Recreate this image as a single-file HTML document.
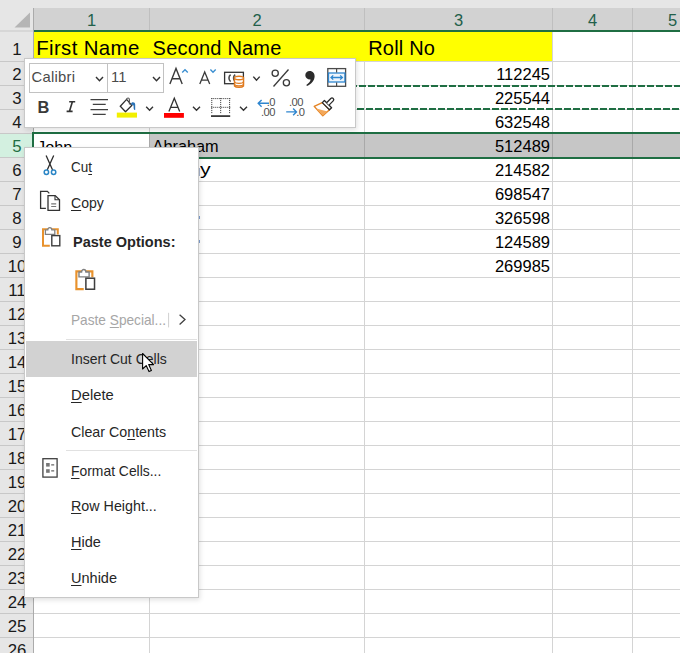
<!DOCTYPE html>
<html><head><meta charset="utf-8"><style>
*{box-sizing:border-box}
html,body{margin:0;padding:0}
body{width:680px;height:653px;overflow:hidden;position:relative;background:#fff;font-family:"Liberation Sans",sans-serif;color:#000}
.ab{position:absolute}
.t{position:absolute;white-space:nowrap;line-height:1}
.mi{position:absolute;left:71px;font-size:14.2px;color:#262626;white-space:nowrap;line-height:1}
.u{text-decoration:underline;text-underline-offset:1.5px;text-decoration-thickness:1px}
</style></head><body>

<div class="ab" style="left:0;top:0;width:680px;height:8px;background:#e6e6e6"></div>
<div class="ab" style="left:0;top:0;width:33px;height:32px;background:#e6e6e6"></div>
<svg class="ab" style="left:0;top:0" width="33" height="32"><polygon points="30,12.5 30,27.5 14.5,27.5" fill="#b5b5b5"/><rect x="0" y="30.5" width="33" height="1" fill="#c8c8c8"/></svg>
<div class="ab" style="left:33px;top:8px;width:647px;height:22px;background:#d2d2d2"></div>
<div class="ab" style="left:149px;top:8px;width:1px;height:22px;background:#bfbfbf"></div>
<div class="ab" style="left:364px;top:8px;width:1px;height:22px;background:#bfbfbf"></div>
<div class="ab" style="left:552px;top:8px;width:1px;height:22px;background:#bfbfbf"></div>
<div class="ab" style="left:632px;top:8px;width:1px;height:22px;background:#bfbfbf"></div>
<div class="t" style="left:71.5px;width:40px;text-align:center;top:12.23px;font-size:16.5px;color:#22604a">1</div>
<div class="t" style="left:237.0px;width:40px;text-align:center;top:12.23px;font-size:16.5px;color:#22604a">2</div>
<div class="t" style="left:438.5px;width:40px;text-align:center;top:12.23px;font-size:16.5px;color:#22604a">3</div>
<div class="t" style="left:572.5px;width:40px;text-align:center;top:12.23px;font-size:16.5px;color:#22604a">4</div>
<div class="t" style="left:652.5px;width:40px;text-align:center;top:12.23px;font-size:16.5px;color:#22604a">5</div>
<div class="ab" style="left:33px;top:30px;width:647px;height:2px;background:#1f6e43"></div>
<div class="ab" style="left:0;top:32px;width:33px;height:621px;background:#e6e6e6"></div>
<div class="ab" style="left:0;top:134px;width:33px;height:23px;background:#d3f0e0"></div>
<div class="ab" style="left:0;top:61px;width:33px;height:1px;background:#c8c8c8"></div>
<div class="ab" style="left:0;top:85px;width:33px;height:1px;background:#c8c8c8"></div>
<div class="ab" style="left:0;top:109px;width:33px;height:1px;background:#c8c8c8"></div>
<div class="ab" style="left:0;top:133px;width:33px;height:1px;background:#c8c8c8"></div>
<div class="ab" style="left:0;top:157px;width:33px;height:1px;background:#c8c8c8"></div>
<div class="ab" style="left:0;top:181px;width:33px;height:1px;background:#c8c8c8"></div>
<div class="ab" style="left:0;top:205px;width:33px;height:1px;background:#c8c8c8"></div>
<div class="ab" style="left:0;top:229px;width:33px;height:1px;background:#c8c8c8"></div>
<div class="ab" style="left:0;top:253px;width:33px;height:1px;background:#c8c8c8"></div>
<div class="ab" style="left:0;top:277px;width:33px;height:1px;background:#c8c8c8"></div>
<div class="ab" style="left:0;top:301px;width:33px;height:1px;background:#c8c8c8"></div>
<div class="ab" style="left:0;top:325px;width:33px;height:1px;background:#c8c8c8"></div>
<div class="ab" style="left:0;top:349px;width:33px;height:1px;background:#c8c8c8"></div>
<div class="ab" style="left:0;top:373px;width:33px;height:1px;background:#c8c8c8"></div>
<div class="ab" style="left:0;top:397px;width:33px;height:1px;background:#c8c8c8"></div>
<div class="ab" style="left:0;top:421px;width:33px;height:1px;background:#c8c8c8"></div>
<div class="ab" style="left:0;top:445px;width:33px;height:1px;background:#c8c8c8"></div>
<div class="ab" style="left:0;top:469px;width:33px;height:1px;background:#c8c8c8"></div>
<div class="ab" style="left:0;top:493px;width:33px;height:1px;background:#c8c8c8"></div>
<div class="ab" style="left:0;top:517px;width:33px;height:1px;background:#c8c8c8"></div>
<div class="ab" style="left:0;top:541px;width:33px;height:1px;background:#c8c8c8"></div>
<div class="ab" style="left:0;top:565px;width:33px;height:1px;background:#c8c8c8"></div>
<div class="ab" style="left:0;top:589px;width:33px;height:1px;background:#c8c8c8"></div>
<div class="ab" style="left:0;top:613px;width:33px;height:1px;background:#c8c8c8"></div>
<div class="ab" style="left:0;top:637px;width:33px;height:1px;background:#c8c8c8"></div>
<div class="ab" style="left:33px;top:8px;width:1px;height:645px;background:#ababab"></div>
<div class="t" style="left:0;width:34px;text-align:center;top:41.78px;font-size:16.8px;color:#1a1a1a">1</div>
<div class="t" style="left:0;width:34px;text-align:center;top:66.58px;font-size:16.8px;color:#1a1a1a">2</div>
<div class="t" style="left:0;width:34px;text-align:center;top:90.58px;font-size:16.8px;color:#1a1a1a">3</div>
<div class="t" style="left:0;width:34px;text-align:center;top:114.58px;font-size:16.8px;color:#1a1a1a">4</div>
<div class="t" style="left:0;width:34px;text-align:center;top:138.58px;font-size:16.8px;color:#1f6e43">5</div>
<div class="t" style="left:0;width:34px;text-align:center;top:162.58px;font-size:16.8px;color:#1a1a1a">6</div>
<div class="t" style="left:0;width:34px;text-align:center;top:186.58px;font-size:16.8px;color:#1a1a1a">7</div>
<div class="t" style="left:0;width:34px;text-align:center;top:210.58px;font-size:16.8px;color:#1a1a1a">8</div>
<div class="t" style="left:0;width:34px;text-align:center;top:234.58px;font-size:16.8px;color:#1a1a1a">9</div>
<div class="t" style="left:0;width:34px;text-align:center;top:258.58px;font-size:16.8px;color:#1a1a1a">10</div>
<div class="t" style="left:0;width:34px;text-align:center;top:282.58px;font-size:16.8px;color:#1a1a1a">11</div>
<div class="t" style="left:0;width:34px;text-align:center;top:306.58px;font-size:16.8px;color:#1a1a1a">12</div>
<div class="t" style="left:0;width:34px;text-align:center;top:330.58px;font-size:16.8px;color:#1a1a1a">13</div>
<div class="t" style="left:0;width:34px;text-align:center;top:354.58px;font-size:16.8px;color:#1a1a1a">14</div>
<div class="t" style="left:0;width:34px;text-align:center;top:378.58px;font-size:16.8px;color:#1a1a1a">15</div>
<div class="t" style="left:0;width:34px;text-align:center;top:402.58px;font-size:16.8px;color:#1a1a1a">16</div>
<div class="t" style="left:0;width:34px;text-align:center;top:426.58px;font-size:16.8px;color:#1a1a1a">17</div>
<div class="t" style="left:0;width:34px;text-align:center;top:450.58px;font-size:16.8px;color:#1a1a1a">18</div>
<div class="t" style="left:0;width:34px;text-align:center;top:474.58px;font-size:16.8px;color:#1a1a1a">19</div>
<div class="t" style="left:0;width:34px;text-align:center;top:498.58px;font-size:16.8px;color:#1a1a1a">20</div>
<div class="t" style="left:0;width:34px;text-align:center;top:522.58px;font-size:16.8px;color:#1a1a1a">21</div>
<div class="t" style="left:0;width:34px;text-align:center;top:546.58px;font-size:16.8px;color:#1a1a1a">22</div>
<div class="t" style="left:0;width:34px;text-align:center;top:570.58px;font-size:16.8px;color:#1a1a1a">23</div>
<div class="t" style="left:0;width:34px;text-align:center;top:594.58px;font-size:16.8px;color:#1a1a1a">24</div>
<div class="t" style="left:0;width:34px;text-align:center;top:618.58px;font-size:16.8px;color:#1a1a1a">25</div>
<div class="t" style="left:0;width:34px;text-align:center;top:642.58px;font-size:16.8px;color:#1a1a1a">26</div>
<div class="ab" style="left:34px;top:61px;width:646px;height:1px;background:#d4d4d4"></div>
<div class="ab" style="left:34px;top:85px;width:646px;height:1px;background:#d4d4d4"></div>
<div class="ab" style="left:34px;top:109px;width:646px;height:1px;background:#d4d4d4"></div>
<div class="ab" style="left:34px;top:133px;width:646px;height:1px;background:#d4d4d4"></div>
<div class="ab" style="left:34px;top:157px;width:646px;height:1px;background:#d4d4d4"></div>
<div class="ab" style="left:34px;top:181px;width:646px;height:1px;background:#d4d4d4"></div>
<div class="ab" style="left:34px;top:205px;width:646px;height:1px;background:#d4d4d4"></div>
<div class="ab" style="left:34px;top:229px;width:646px;height:1px;background:#d4d4d4"></div>
<div class="ab" style="left:34px;top:253px;width:646px;height:1px;background:#d4d4d4"></div>
<div class="ab" style="left:34px;top:277px;width:646px;height:1px;background:#d4d4d4"></div>
<div class="ab" style="left:34px;top:301px;width:646px;height:1px;background:#d4d4d4"></div>
<div class="ab" style="left:34px;top:325px;width:646px;height:1px;background:#d4d4d4"></div>
<div class="ab" style="left:34px;top:349px;width:646px;height:1px;background:#d4d4d4"></div>
<div class="ab" style="left:34px;top:373px;width:646px;height:1px;background:#d4d4d4"></div>
<div class="ab" style="left:34px;top:397px;width:646px;height:1px;background:#d4d4d4"></div>
<div class="ab" style="left:34px;top:421px;width:646px;height:1px;background:#d4d4d4"></div>
<div class="ab" style="left:34px;top:445px;width:646px;height:1px;background:#d4d4d4"></div>
<div class="ab" style="left:34px;top:469px;width:646px;height:1px;background:#d4d4d4"></div>
<div class="ab" style="left:34px;top:493px;width:646px;height:1px;background:#d4d4d4"></div>
<div class="ab" style="left:34px;top:517px;width:646px;height:1px;background:#d4d4d4"></div>
<div class="ab" style="left:34px;top:541px;width:646px;height:1px;background:#d4d4d4"></div>
<div class="ab" style="left:34px;top:565px;width:646px;height:1px;background:#d4d4d4"></div>
<div class="ab" style="left:34px;top:589px;width:646px;height:1px;background:#d4d4d4"></div>
<div class="ab" style="left:34px;top:613px;width:646px;height:1px;background:#d4d4d4"></div>
<div class="ab" style="left:34px;top:637px;width:646px;height:1px;background:#d4d4d4"></div>
<div class="ab" style="left:149px;top:32px;width:1px;height:621px;background:#d4d4d4"></div>
<div class="ab" style="left:364px;top:32px;width:1px;height:621px;background:#d4d4d4"></div>
<div class="ab" style="left:552px;top:32px;width:1px;height:621px;background:#d4d4d4"></div>
<div class="ab" style="left:632px;top:32px;width:1px;height:621px;background:#d4d4d4"></div>
<div class="ab" style="left:34px;top:32px;width:518px;height:29px;background:#ffff00"></div>
<div class="ab" style="left:149px;top:134px;width:531px;height:23px;background:#c6c6c6"></div>
<div class="ab" style="left:149px;top:134px;width:1px;height:23px;background:#a9a9a9"></div>
<div class="ab" style="left:364px;top:134px;width:1px;height:23px;background:#a9a9a9"></div>
<div class="ab" style="left:552px;top:134px;width:1px;height:23px;background:#a9a9a9"></div>
<div class="ab" style="left:632px;top:134px;width:1px;height:23px;background:#a9a9a9"></div>
<div class="t" style="left:36.2px;top:37.93px;font-size:20.4px;letter-spacing:0.38px">First Name</div>
<div class="t" style="left:152.6px;top:38.07px;font-size:20px;letter-spacing:0.2px">Second Name</div>
<div class="t" style="left:368.2px;top:37.87px;font-size:20px;letter-spacing:0.2px">Roll No</div>
<div class="t" style="left:449px;width:101px;text-align:right;top:67.43px;font-size:15.8px;transform:scaleX(1.045);transform-origin:100% 0">112245</div>
<div class="t" style="left:449px;width:101px;text-align:right;top:91.43px;font-size:15.8px;transform:scaleX(1.045);transform-origin:100% 0">225544</div>
<div class="t" style="left:449px;width:101px;text-align:right;top:115.43px;font-size:15.8px;transform:scaleX(1.045);transform-origin:100% 0">632548</div>
<div class="t" style="left:449px;width:101px;text-align:right;top:139.43px;font-size:15.8px;transform:scaleX(1.045);transform-origin:100% 0">512489</div>
<div class="t" style="left:449px;width:101px;text-align:right;top:163.43px;font-size:15.8px;transform:scaleX(1.045);transform-origin:100% 0">214582</div>
<div class="t" style="left:449px;width:101px;text-align:right;top:187.43px;font-size:15.8px;transform:scaleX(1.045);transform-origin:100% 0">698547</div>
<div class="t" style="left:449px;width:101px;text-align:right;top:211.43px;font-size:15.8px;transform:scaleX(1.045);transform-origin:100% 0">326598</div>
<div class="t" style="left:449px;width:101px;text-align:right;top:235.43px;font-size:15.8px;transform:scaleX(1.045);transform-origin:100% 0">124589</div>
<div class="t" style="left:449px;width:101px;text-align:right;top:259.43px;font-size:15.8px;transform:scaleX(1.045);transform-origin:100% 0">269985</div>
<div class="t" style="left:37px;top:138.70px;font-size:16.3px">John</div>
<div class="t" style="left:152.6px;top:138.20px;font-size:16.3px">Abraham</div>
<div class="t" style="left:199.8px;top:161.95px;font-size:16.6px;transform:scaleX(1.28);transform-origin:0 0">y</div>
<div class="ab" style="left:199px;top:168px;width:1px;height:8px;background:#6a7fa8;opacity:0.6"></div>
<div class="ab" style="left:199px;top:215.5px;width:1px;height:3px;background:#4a78c0;opacity:0.7"></div>
<div class="ab" style="left:199px;top:239.5px;width:1px;height:3px;background:#4a78c0;opacity:0.7"></div>
<div class="ab" style="left:33px;top:85px;width:647px;height:2px;background:repeating-linear-gradient(90deg,#1f6e43 0 7px,transparent 7px 9px);background-position:2px 0"></div>
<div class="ab" style="left:33px;top:108px;width:647px;height:2px;background:repeating-linear-gradient(90deg,#1f6e43 0 7px,transparent 7px 9px);background-position:0px 0"></div>
<div class="ab" style="left:32px;top:132px;width:648px;height:2px;background:#1f6e43"></div>
<div class="ab" style="left:32px;top:157px;width:648px;height:2px;background:#1f6e43"></div>
<div class="ab" style="left:32px;top:132px;width:2px;height:27px;background:#1f6e43"></div>
<div class="ab" style="left:24px;top:58px;width:332px;height:70px;background:#fff;border:1px solid #c8c8c8;box-shadow:1px 2px 5px rgba(0,0,0,0.12)"></div>
<div class="ab" style="left:29px;top:63px;width:79px;height:30px;border:1px solid #c2c2c2"></div>
<div class="ab" style="left:107px;top:63px;width:57px;height:30px;border:1px solid #c2c2c2"></div>
<div class="t" style="left:31.4px;top:70.07px;font-size:14.8px;letter-spacing:0.3px;color:#4a4a4a">Calibri</div>
<div class="t" style="left:111px;top:70.47px;font-size:14.8px;color:#4a4a4a">11</div>
<div class="t" style="left:37.6px;top:99.12px;font-size:16.4px;font-weight:bold;color:#3a3a3a">B</div>
<svg class="ab" style="left:0;top:0" width="680" height="653"><path d="M96 77 L99.5 80.8 L103 77" fill="none" stroke="#333" stroke-width="1.4"/><path d="M153 77 L156.5 80.8 L160 77" fill="none" stroke="#333" stroke-width="1.4"/><path d="M253.3 76.6 L256.5 80.2 L259.7 76.6" fill="none" stroke="#333" stroke-width="1.4"/><path d="M146.2 106.8 L149.6 110.2 L153 106.8" fill="none" stroke="#333" stroke-width="1.4"/><path d="M193 106.8 L196.5 110.2 L200 106.8" fill="none" stroke="#333" stroke-width="1.4"/><path d="M240 106.8 L243.5 110.2 L247 106.8" fill="none" stroke="#333" stroke-width="1.4"/><path d="M169.9 84 L176 68.4 L182.2 84 M171.8 78.8 L180.2 78.8" fill="none" stroke="#3a3a3a" stroke-width="1.4"/><path d="M182.2 72.4 L185 69.8 L187.8 72.4" fill="none" stroke="#3b8fd1" stroke-width="1.4"/><path d="M199.8 84 L204.7 72 L209.7 84 M201.3 80.1 L208.1 80.1" fill="none" stroke="#3a3a3a" stroke-width="1.3"/><path d="M210.4 69.5 L213 72.2 L215.7 69.5" fill="none" stroke="#3b8fd1" stroke-width="1.4"/><rect x="224.6" y="72.3" width="18.8" height="11.4" fill="none" stroke="#333" stroke-width="1.3"/><path d="M230.6 74.6 A3.4 4.1 0 0 0 230.6 81.6 M235.2 74.6 A3.4 4.1 0 0 0 235.2 81.6" fill="none" stroke="#4a4a4a" stroke-width="1.6"/><path d="M234.5 78 L234.5 86 A4.7 1.8 0 0 0 243.5 86 L243.5 78 Z" fill="#fff" stroke="#e07a1e" stroke-width="1.4"/><ellipse cx="239" cy="78" rx="4.5" ry="1.8" fill="#fff" stroke="#e07a1e" stroke-width="1.4"/><path d="M234.5 81.5 A4.5 1.8 0 0 0 243.5 81.5 M234.5 84 A4.5 1.8 0 0 0 243.5 84" fill="none" stroke="#e07a1e" stroke-width="1.2"/><circle cx="275.2" cy="73.2" r="3.1" fill="none" stroke="#3a3a3a" stroke-width="1.3"/><circle cx="286.4" cy="82.8" r="3.1" fill="none" stroke="#3a3a3a" stroke-width="1.3"/><path d="M288.5 69.5 L273.5 86.5" stroke="#3a3a3a" stroke-width="1.3"/><path d="M309.6 71 C313 71 314.8 73.5 314.6 76.5 C314.4 80.5 311.5 84 307 86 L306.3 85 C309 83.2 310.3 81.5 310.6 79.6 C307.7 79.8 305.3 78 305.3 75.3 C305.3 72.8 307.2 71 309.6 71 Z" fill="#2b2b2b"/><rect x="327.8" y="68.6" width="17.8" height="17.7" fill="#fff" stroke="#4a4a4a" stroke-width="1.3"/><rect x="328.5" y="73" width="16.4" height="9" fill="#eef5fc" stroke="#2f86cf" stroke-width="1.3"/><path d="M336.6 69 L336.6 72.5 M336.6 82.5 L336.6 86" stroke="#4a4a4a" stroke-width="1.2"/><path d="M331 77.5 L342.4 77.5 M333.2 75.4 L331 77.5 L333.2 79.6 M340.2 75.4 L342.4 77.5 L340.2 79.6" fill="none" stroke="#2f86cf" stroke-width="1.3"/><path d="M69.2 101.8 H75.2 M66.6 111.4 H72.6 M72.4 101.8 L69.4 111.4" fill="none" stroke="#333" stroke-width="1.6"/><path d="M90.5 99.6 H108 M92.8 104.4 H105.7 M90.5 109.6 H108 M92.8 114.4 H105.7" stroke="#404040" stroke-width="1.4"/><path d="M120.3 106.2 L126.6 99.4 L131.8 105.4 L125.5 111.8 Z" fill="#fff" stroke="#2e2e2e" stroke-width="1.3"/><path d="M126.4 99.6 C127 97.6 129.2 97.4 129.4 99.6 L129.4 104.6" fill="none" stroke="#555" stroke-width="1.1"/><path d="M131 104.2 C131 101.8 135.2 101.6 135.2 104.6 L135.2 110 C134.4 110 133.6 109.2 133.6 107.4 L133.6 105.6 Z" fill="#2a72b6"/><rect x="116.8" y="112.6" width="20.2" height="5" fill="#f2ef00"/><path d="M168.9 111.5 L174.3 98.3 L179.7 111.5 M170.8 107.3 L177.8 107.3" fill="none" stroke="#333" stroke-width="1.3"/><rect x="164" y="113" width="19.9" height="4.8" fill="#ff0000"/><rect x="211.2" y="98.0" width="1.1" height="1.1" fill="#555"/><rect x="213.2" y="98.0" width="1.1" height="1.1" fill="#555"/><rect x="215.2" y="98.0" width="1.1" height="1.1" fill="#555"/><rect x="217.2" y="98.0" width="1.1" height="1.1" fill="#555"/><rect x="219.2" y="98.0" width="1.1" height="1.1" fill="#555"/><rect x="221.2" y="98.0" width="1.1" height="1.1" fill="#555"/><rect x="223.2" y="98.0" width="1.1" height="1.1" fill="#555"/><rect x="225.2" y="98.0" width="1.1" height="1.1" fill="#555"/><rect x="227.2" y="98.0" width="1.1" height="1.1" fill="#555"/><rect x="229.2" y="98.0" width="1.1" height="1.1" fill="#555"/><rect x="211.2" y="106.80000000000001" width="1.1" height="1.1" fill="#555"/><rect x="213.2" y="106.80000000000001" width="1.1" height="1.1" fill="#555"/><rect x="215.2" y="106.80000000000001" width="1.1" height="1.1" fill="#555"/><rect x="217.2" y="106.80000000000001" width="1.1" height="1.1" fill="#555"/><rect x="219.2" y="106.80000000000001" width="1.1" height="1.1" fill="#555"/><rect x="221.2" y="106.80000000000001" width="1.1" height="1.1" fill="#555"/><rect x="223.2" y="106.80000000000001" width="1.1" height="1.1" fill="#555"/><rect x="225.2" y="106.80000000000001" width="1.1" height="1.1" fill="#555"/><rect x="227.2" y="106.80000000000001" width="1.1" height="1.1" fill="#555"/><rect x="229.2" y="106.80000000000001" width="1.1" height="1.1" fill="#555"/><rect x="211.2" y="98" width="1.1" height="1.1" fill="#555"/><rect x="211.2" y="100" width="1.1" height="1.1" fill="#555"/><rect x="211.2" y="102" width="1.1" height="1.1" fill="#555"/><rect x="211.2" y="104" width="1.1" height="1.1" fill="#555"/><rect x="211.2" y="106" width="1.1" height="1.1" fill="#555"/><rect x="211.2" y="108" width="1.1" height="1.1" fill="#555"/><rect x="211.2" y="110" width="1.1" height="1.1" fill="#555"/><rect x="211.2" y="112" width="1.1" height="1.1" fill="#555"/><rect x="220.1" y="98" width="1.1" height="1.1" fill="#555"/><rect x="220.1" y="100" width="1.1" height="1.1" fill="#555"/><rect x="220.1" y="102" width="1.1" height="1.1" fill="#555"/><rect x="220.1" y="104" width="1.1" height="1.1" fill="#555"/><rect x="220.1" y="106" width="1.1" height="1.1" fill="#555"/><rect x="220.1" y="108" width="1.1" height="1.1" fill="#555"/><rect x="220.1" y="110" width="1.1" height="1.1" fill="#555"/><rect x="220.1" y="112" width="1.1" height="1.1" fill="#555"/><rect x="229.0" y="98" width="1.1" height="1.1" fill="#555"/><rect x="229.0" y="100" width="1.1" height="1.1" fill="#555"/><rect x="229.0" y="102" width="1.1" height="1.1" fill="#555"/><rect x="229.0" y="104" width="1.1" height="1.1" fill="#555"/><rect x="229.0" y="106" width="1.1" height="1.1" fill="#555"/><rect x="229.0" y="108" width="1.1" height="1.1" fill="#555"/><rect x="229.0" y="110" width="1.1" height="1.1" fill="#555"/><rect x="229.0" y="112" width="1.1" height="1.1" fill="#555"/><rect x="211" y="115.2" width="19.2" height="1.8" fill="#3a3a3a"/><path d="M258.2 103.3 L269 103.3 M261.6 99.9 L258.2 103.3 L261.6 106.7" fill="none" stroke="#2f86cf" stroke-width="1.4"/><path d="M286.2 111.9 L296.5 111.9 M293.1 108.5 L296.5 111.9 L293.1 115.3" fill="none" stroke="#2f86cf" stroke-width="1.4"/><path d="M314.2 106.4 L322.3 102.6 L329.5 109.8 L322.8 115.8 Z" fill="#fff" stroke="#e58424" stroke-width="1.4" stroke-linejoin="round"/><path d="M316.2 108.6 L327.6 111.6 L322.8 115.4 Z" fill="#f3a85a"/><path d="M322.3 102.6 L324.4 100.5 L331.6 107.7 L329.5 109.8 Z" fill="#fff" stroke="#2a2a2a" stroke-width="1.3" stroke-linejoin="round"/><path d="M326.6 102.7 L330.8 98.5 C331.6 97.7 332.4 97.7 333.2 98.5 C334 99.3 334 100.1 333.2 100.9 L329 105.1" fill="#fff" stroke="#2a2a2a" stroke-width="1.3" stroke-linejoin="round"/></svg>
<div class="t" style="left:266.8px;top:97.12px;font-size:11.2px;color:#505050;letter-spacing:-0.6px">.0</div>
<div class="t" style="left:261px;top:107.02px;font-size:11.2px;color:#505050;letter-spacing:-0.6px">.00</div>
<div class="t" style="left:289px;top:97.12px;font-size:11.2px;color:#505050;letter-spacing:-0.6px">.00</div>
<div class="t" style="left:296.2px;top:107.02px;font-size:11.2px;color:#505050;letter-spacing:-0.6px">.0</div>
<div class="ab" style="left:24px;top:147px;width:175px;height:451px;background:#fff;border:1px solid #c8c8c8;box-shadow:1px 2px 5px rgba(0,0,0,0.12)"></div>
<div class="ab" style="left:26px;top:341px;width:171px;height:36px;background:#d2d2d2"></div>
<div class="ab" style="left:66px;top:339px;width:131px;height:1px;background:#e1e1e1"></div>
<div class="ab" style="left:66px;top:449.5px;width:131px;height:1px;background:#e1e1e1"></div>
<div class="t" style="left:71.2px;top:160.07px;font-size:14.8px;font-weight:400;color:#262626;transform:scaleX(0.9119);transform-origin:0 0">Cu<span class="u">t</span></div>
<div class="t" style="left:71.2px;top:195.57px;font-size:14.8px;font-weight:400;color:#262626;transform:scaleX(0.9500);transform-origin:0 0"><span class="u">C</span>opy</div>
<div class="t" style="left:72.6px;top:235.07px;font-size:14.8px;font-weight:700;color:#262626;transform:scaleX(0.9816);transform-origin:0 0">Paste Options:</div>
<div class="t" style="left:71.2px;top:313.07px;font-size:14.8px;font-weight:400;color:#a6a6a6;transform:scaleX(0.9240);transform-origin:0 0">Paste <span class="u">S</span>pecial...</div>
<div class="t" style="left:71.2px;top:352.37px;font-size:14.8px;font-weight:400;color:#262626;transform:scaleX(0.9470);transform-origin:0 0">Insert Cut Cells</div>
<div class="t" style="left:71.2px;top:388.17px;font-size:14.8px;font-weight:400;color:#262626;transform:scaleX(0.9981);transform-origin:0 0"><span class="u">D</span>elete</div>
<div class="t" style="left:71.2px;top:424.57px;font-size:14.8px;font-weight:400;color:#262626;transform:scaleX(0.9625);transform-origin:0 0">Clear Co<span class="u">n</span>tents</div>
<div class="t" style="left:71.2px;top:463.67px;font-size:14.8px;font-weight:400;color:#262626;transform:scaleX(0.9387);transform-origin:0 0"><span class="u">F</span>ormat Cells...</div>
<div class="t" style="left:71.2px;top:498.77px;font-size:14.8px;font-weight:400;color:#262626;transform:scaleX(0.9659);transform-origin:0 0"><span class="u">R</span>ow Height...</div>
<div class="t" style="left:71.2px;top:535.07px;font-size:14.8px;font-weight:400;color:#262626;transform:scaleX(0.9800);transform-origin:0 0"><span class="u">H</span>ide</div>
<div class="t" style="left:71.2px;top:571.47px;font-size:14.8px;font-weight:400;color:#262626;transform:scaleX(0.9810);transform-origin:0 0"><span class="u">U</span>nhide</div>
<svg class="ab" style="left:0;top:0" width="680" height="653"><path d="M46.1 155.4 L52.6 170 M53.7 155.4 L47.2 170" stroke="#2d2d2d" stroke-width="1.3"/><circle cx="46.4" cy="172.3" r="2.2" fill="#fff" stroke="#2b86c6" stroke-width="1.5"/><circle cx="53.6" cy="172.3" r="2.2" fill="#fff" stroke="#2b86c6" stroke-width="1.5"/><path d="M45.9 208.3 L40.6 208.3 L40.6 191.4 L47.4 191.4 L49.3 193.4" fill="none" stroke="#333" stroke-width="1.3"/><path d="M48 195.6 L55.2 195.6 L59.5 199.8 L59.5 210.4 L48 210.4 Z" fill="#fff" stroke="#333" stroke-width="1.3"/><path d="M55 195.8 L55 199.8 L59.4 199.8" fill="none" stroke="#333" stroke-width="1.1"/><path d="M51.2 203.9 H56.2 M51.2 206.5 H56.2" stroke="#777" stroke-width="1.1"/><g transform="translate(42 228) scale(1.0)"><path d="M7.8 17.7 L1 17.7 L1 1.2 L15.8 1.2 L15.8 6.6" fill="none" stroke="#e8922d" stroke-width="2"/><path d="M3.4 6.4 L3.4 1.8 L5.8 1.8 C5.8 -1.2 9.8 -1.2 9.8 1.8 L12.8 1.8 L12.8 6.4 Z" fill="#fff" stroke="#808080" stroke-width="1.3"/><rect x="9.8" y="7.6" width="8" height="10.2" fill="#fff" stroke="#3e3e3e" stroke-width="1.4"/></g><g transform="translate(75.3 270) scale(1.08)"><path d="M7.8 17.7 L1 17.7 L1 1.2 L15.8 1.2 L15.8 6.6" fill="none" stroke="#e8922d" stroke-width="2"/><path d="M3.4 6.4 L3.4 1.8 L5.8 1.8 C5.8 -1.2 9.8 -1.2 9.8 1.8 L12.8 1.8 L12.8 6.4 Z" fill="#fff" stroke="#808080" stroke-width="1.3"/><rect x="9.8" y="7.6" width="8" height="10.2" fill="#fff" stroke="#3e3e3e" stroke-width="1.4"/></g><path d="M168.6 312.8 V327.4" stroke="#d0d0d0" stroke-width="1"/><path d="M179.6 314.8 L185 319.6 L179.6 324.4" fill="none" stroke="#404040" stroke-width="1.3"/><rect x="42.9" y="458.7" width="14.2" height="18.4" fill="#fff" stroke="#404040" stroke-width="1.3"/><rect x="46.1" y="463" width="3.6" height="3.6" fill="#777"/><rect x="46.1" y="469.2" width="3.6" height="3.6" fill="#777"/><path d="M51.2 464.9 H54.2 M51.2 470.9 H54.2" stroke="#666" stroke-width="1.4"/><path d="M142.6 353.5 L142.6 369 L146.2 365.6 L149 371.6 L151.4 370.5 L148.7 364.6 L153.6 364.6 Z" fill="#fff" stroke="#000" stroke-width="1.1" stroke-linejoin="round"/></svg>
</body></html>
